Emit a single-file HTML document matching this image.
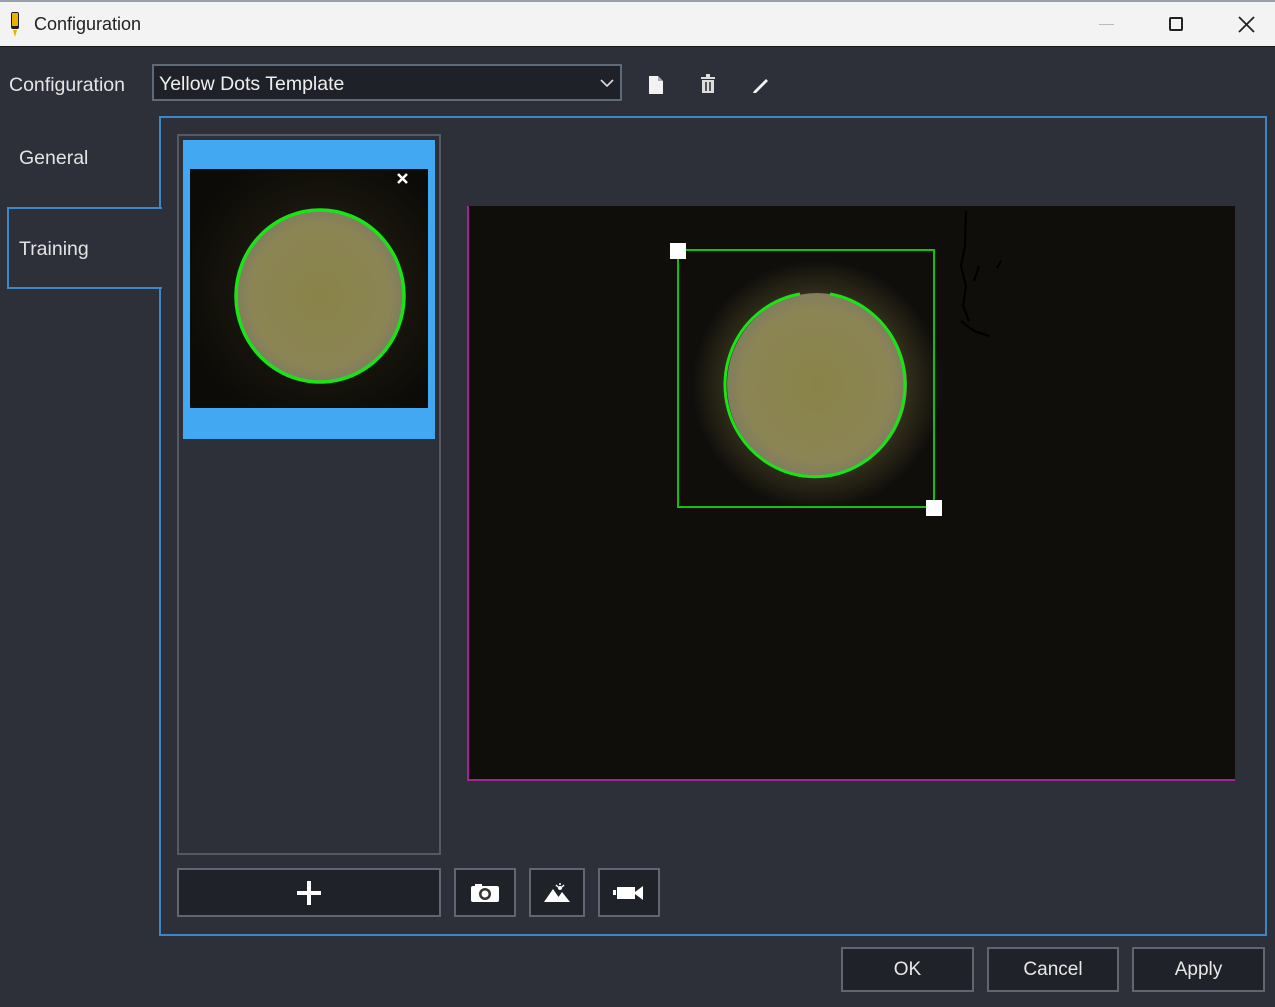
<!DOCTYPE html>
<html><head><meta charset="utf-8">
<style>
*{box-sizing:border-box;margin:0;padding:0}
body{width:1275px;height:1007px;background:#2d3039;font-family:"Liberation Sans",sans-serif;position:relative;overflow:hidden}
.a{position:absolute}
.title{left:0;top:0;width:1275px;height:47px;background:#f3f3f3;border-top:2px solid #9aa0a8;border-bottom:1px solid #1a1a1a}
.txt{color:#e4e4e4;font-size:19.5px}
.btn{background:#20222a;border:2px solid #5f6670;color:#e8e8e8;font-size:19px;display:flex;align-items:center;justify-content:center}
</style></head><body>
<div class="a title">
 <svg class="a" style="left:9px;top:10px" width="12" height="26"><rect x="2" y="0" width="8" height="17" rx="2" fill="#1d1d1d"/><path d="M3 1 L9 1 L9 14 L3 14 Z" fill="#e8b000"/><path d="M4 18 L8 18 L6 25 Z" fill="#e8b000"/></svg>
 <div class="a" style="left:34px;top:12px;font-size:18px;color:#222">Configuration</div>
 <div class="a" style="left:1099px;top:22px;width:15px;height:1px;background:#bbb"></div>
 <div class="a" style="left:1169px;top:15px;width:14px;height:14px;border:2px solid #222;border-radius:2px"></div>
 <svg class="a" style="left:1238px;top:14px" width="17" height="17"><path d="M1 1L16 16M16 1L1 16" stroke="#222" stroke-width="1.8"/></svg>
</div>
<div class="a txt" style="left:9px;top:74px">Configuration</div>
<div class="a" style="left:152px;top:64px;width:470px;height:37px;background:#1f2129;border:2px solid #5f6a78"></div>
<div class="a txt" style="left:159px;top:73px;color:#eee">Yellow Dots Template</div>
<svg class="a" style="left:600px;top:78px" width="14" height="10"><path d="M1 2L7 8L13 2" stroke="#ddd" stroke-width="1.6" fill="none"/></svg>
<svg class="a" style="left:647px;top:75px" width="18" height="20"><path d="M2 1H11L16 6V19H2Z" fill="#f2f2f2"/><path d="M11 1V6H16" fill="#aaa"/></svg>
<svg class="a" style="left:700px;top:74px" width="16" height="20"><rect x="1" y="3" width="14" height="2" fill="#ddd"/><rect x="6" y="0" width="4" height="3" fill="#ddd"/><rect x="2" y="6" width="12" height="13" fill="#ddd"/><rect x="5" y="8" width="2" height="9" fill="#555"/><rect x="9" y="8" width="2" height="9" fill="#555"/></svg>
<svg class="a" style="left:751px;top:74px" width="20" height="20"><path d="M3 17L15 5L17 7L5 19L2 19Z" fill="#f2f2f2"/></svg>

<div class="a" style="left:159px;top:116px;width:1108px;height:820px;border:2px solid #3e87c7"></div>
<div class="a" style="left:7px;top:207px;width:155px;height:82px;border:2px solid #3e87c7;border-right:none;background:#2d3039"></div>
<div class="a" style="left:159px;top:209px;width:4px;height:78px;background:#2d3039"></div>
<div class="a txt" style="left:19px;top:147px">General</div>
<div class="a txt" style="left:19px;top:238px">Training</div>

<div class="a" style="left:177px;top:134px;width:264px;height:721px;border:2px solid #555a62"></div>
<div class="a" style="left:183px;top:140px;width:252px;height:299px;background:#41a8f1"></div>
<div class="a" style="left:190px;top:169px;width:238px;height:239px;background:radial-gradient(circle at 55% 50%,#3b3720 0,#16140c 50%,#0c0b07 80%)"></div>
<svg class="a" style="left:190px;top:169px" width="238" height="239">
 <defs><radialGradient id="g1" cx="50%" cy="50%" r="55%"><stop offset="0" stop-color="#8a8348"/><stop offset="0.75" stop-color="#8b8555"/><stop offset="1" stop-color="#7c7862"/></radialGradient></defs>
 <ellipse cx="130" cy="127" rx="84" ry="86" fill="url(#g1)" stroke="#18e418" stroke-width="3.5"/>
 <path d="M208 5L217 14M217 5L208 14" stroke="#fff" stroke-width="2.5"/>
</svg>

<div class="a" style="left:467px;top:206px;width:768px;height:575px;background:#0f0e0b;border-left:2px solid #a42494;border-bottom:2px solid #a42494"></div>
<svg class="a" style="left:469px;top:206px" width="766" height="573">
 <defs><radialGradient id="g2" cx="50%" cy="50%" r="55%"><stop offset="0" stop-color="#8a8348"/><stop offset="0.75" stop-color="#8b8555"/><stop offset="1" stop-color="#7c7862"/></radialGradient>
 <radialGradient id="gl" cx="50%" cy="50%" r="50%"><stop offset="0.7" stop-color="#35301c"/><stop offset="1" stop-color="#0f0e0b"/></radialGradient></defs>
 <ellipse cx="348" cy="179" rx="125" ry="125" fill="url(#gl)"/>
 <path d="M497 5L496 40L492 60L497 80L494 100L500 115M492 115L505 125L520 130M510 60L505 75M532 55L528 62" stroke="#000" stroke-width="2" fill="none"/>
 <rect x="209" y="44" width="256" height="257" fill="none" stroke="#15c015" stroke-width="2"/>
 <ellipse cx="348" cy="179" rx="90" ry="92" fill="url(#g2)"/>
 <path d="M331 88 A90 92 0 1 0 361 88" fill="none" stroke="#18e418" stroke-width="3"/>
 <rect x="201" y="37" width="16" height="16" fill="#fff"/>
 <rect x="457" y="294" width="16" height="16" fill="#fff"/>
</svg>

<div class="a btn" style="left:177px;top:868px;width:264px;height:49px"><svg width="26" height="26"><path d="M13 1V25M1 13H25" stroke="#fff" stroke-width="4"/></svg></div>
<div class="a btn" style="left:454px;top:868px;width:62px;height:49px"><svg width="30" height="20"><rect x="1" y="3" width="28" height="16" rx="2" fill="#fff"/><rect x="5" y="1" width="7" height="3" fill="#fff"/><circle cx="15" cy="11" r="6" fill="#333"/><circle cx="15" cy="11" r="3.5" fill="#fff"/></svg></div>
<div class="a btn" style="left:529px;top:868px;width:56px;height:49px"><svg width="28" height="20"><path d="M1 19L10 6L19 19Z M12 19L19 9L27 19Z" fill="#fff"/><circle cx="17" cy="5" r="2" fill="#fff"/><path d="M17 0V2M21 2L19 4M13 2L15 4" stroke="#fff" stroke-width="1.5"/></svg></div>
<div class="a btn" style="left:598px;top:868px;width:62px;height:49px"><svg width="32" height="16"><rect x="4" y="2" width="18" height="12" fill="#fff"/><path d="M22 7L30 1V15L22 9Z" fill="#fff"/><rect x="0" y="5" width="3" height="5" fill="#fff"/></svg></div>

<div class="a btn" style="left:841px;top:947px;width:133px;height:45px">OK</div>
<div class="a btn" style="left:987px;top:947px;width:132px;height:45px">Cancel</div>
<div class="a btn" style="left:1132px;top:947px;width:133px;height:45px">Apply</div>
</body></html>
